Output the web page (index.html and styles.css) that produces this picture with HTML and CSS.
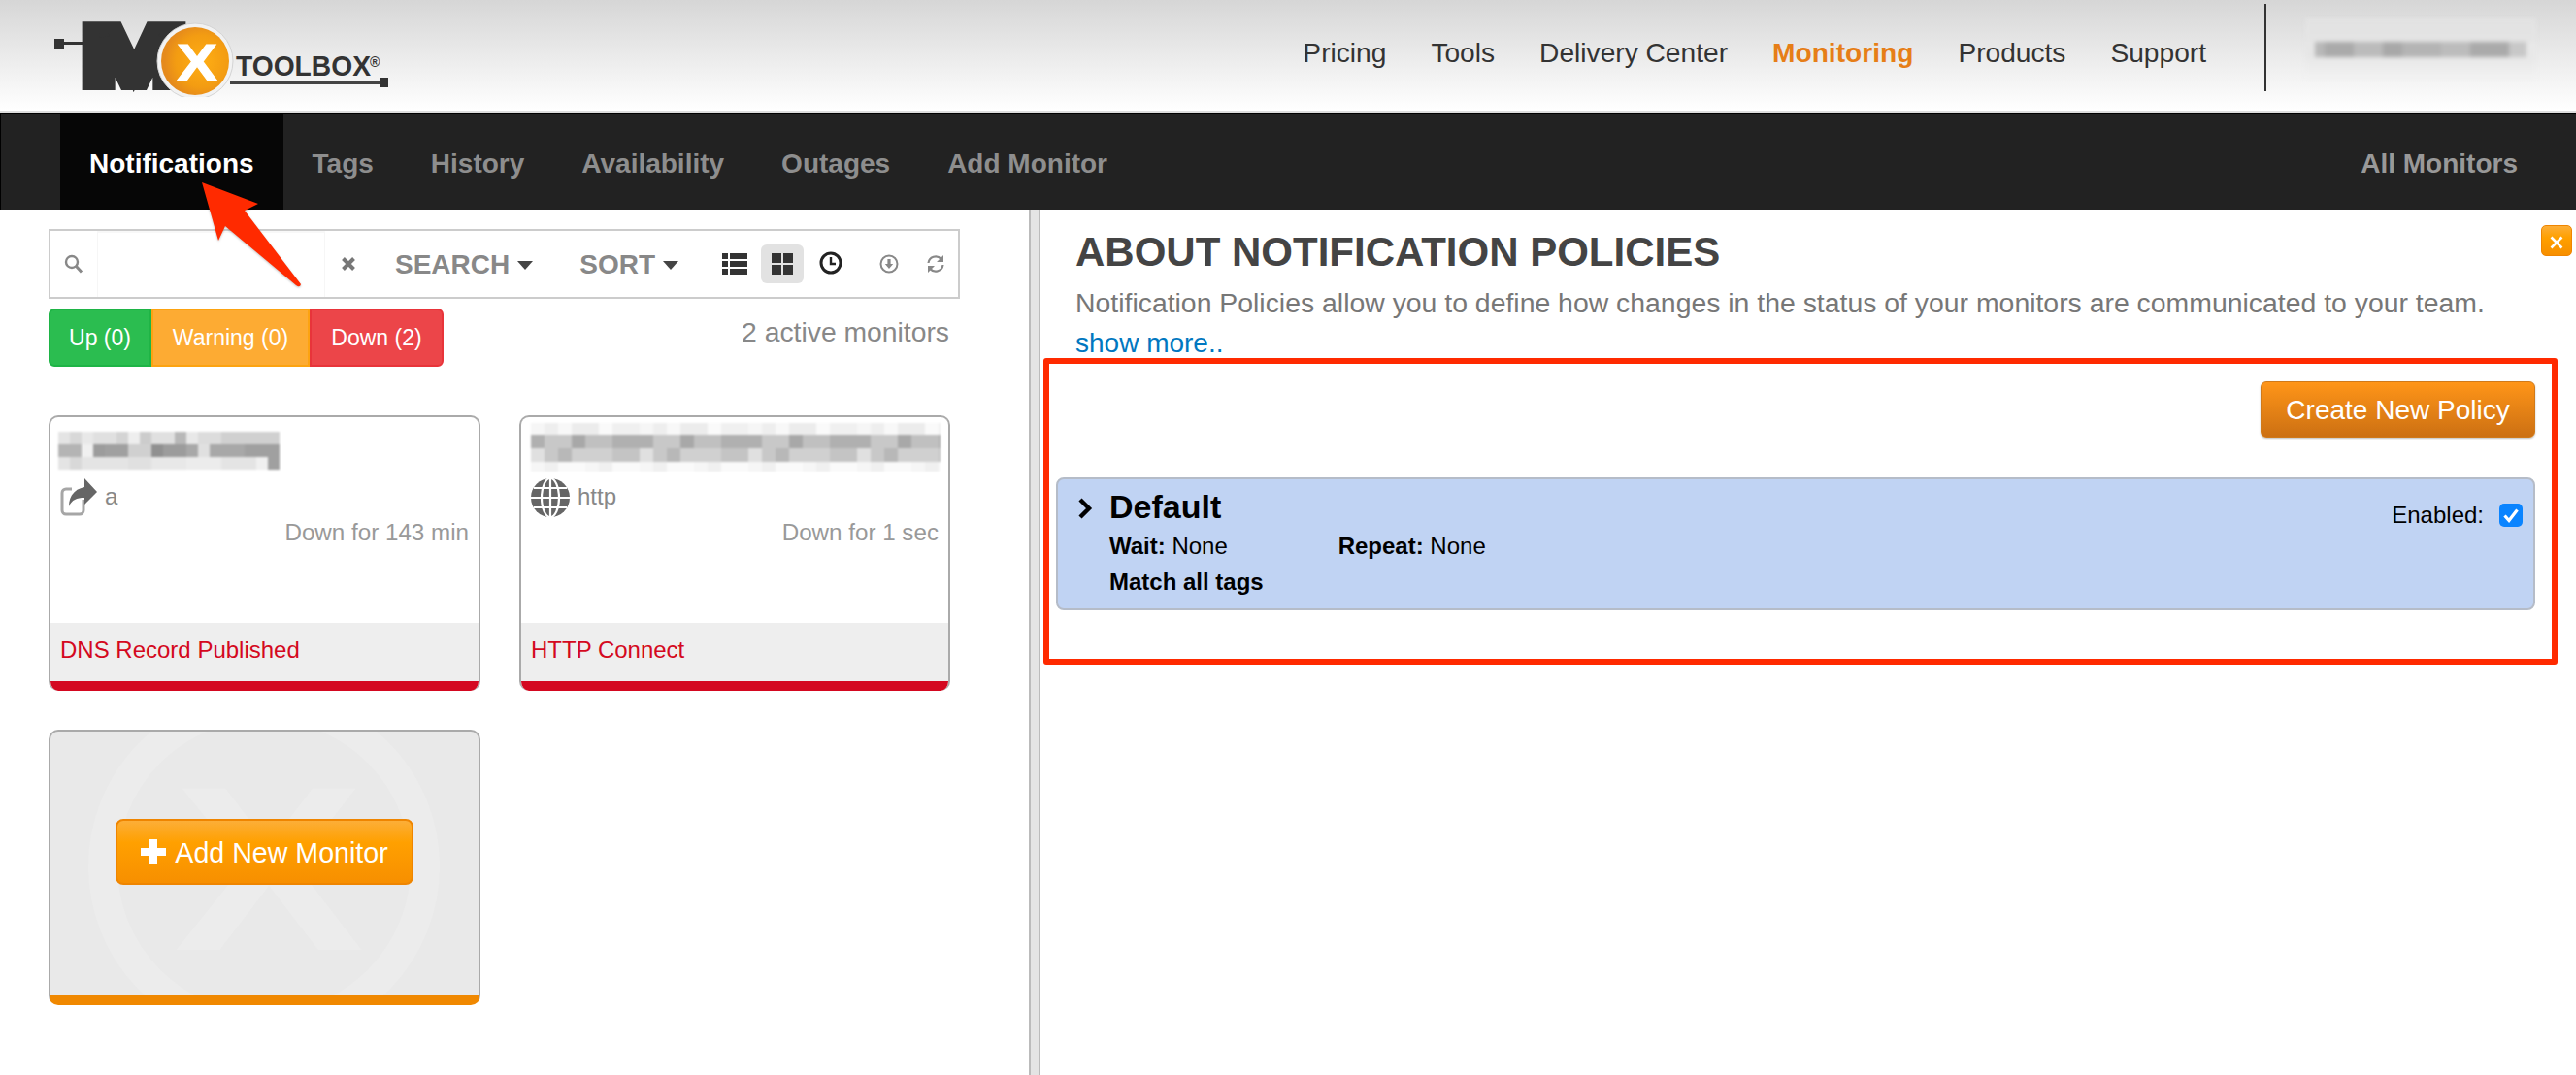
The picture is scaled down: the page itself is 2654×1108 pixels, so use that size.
FILE: index.html
```html
<!DOCTYPE html>
<html lang="en">
<head>
    <meta charset="UTF-8">
    <meta name="viewport" content="width=device-width, initial-scale=1.0">
    <title>MxToolbox Monitoring</title>
    <link rel="stylesheet" href="styles.css">
</head>
<body>
    <header class="topbar">
        <svg class="logo" viewBox="50 10 352 90" width="352" height="90">
            <defs>
                <radialGradient id="logo-orange" cx="60%" cy="50%" r="55%">
                    <stop offset="0" stop-color="#ffae14"/>
                    <stop offset="0.7" stop-color="#f39c12"/>
                    <stop offset="1" stop-color="#e58a1c"/>
                </radialGradient>
            </defs>
            <rect x="56" y="40" width="10" height="10" fill="#333"/>
            <rect x="64" y="43" width="23" height="3" fill="#333"/>
            <text class="logo-m" x="85" y="87" textLength="106" lengthAdjust="spacingAndGlyphs">M</text>
            <circle cx="201" cy="63" r="39" fill="#f2f2f2" stroke="#d4d4d4"/>
            <circle cx="201" cy="63" r="35" fill="url(#logo-orange)"/>
            <text class="logo-x" x="182" y="83" textLength="42" lengthAdjust="spacingAndGlyphs">X</text>
            <text class="logo-name" x="243" y="78" textLength="139" lengthAdjust="spacingAndGlyphs">TOOLBOX</text>
            <text class="logo-reg" x="381" y="69">®</text>
            <rect x="237" y="83" width="156" height="4" fill="#444"/>
            <rect x="391" y="80" width="9" height="10" fill="#333"/>
        </svg>
        <nav class="mainnav">
            <a>Pricing</a>
            <a>Tools</a>
            <a>Delivery Center</a>
            <a class="current">Monitoring</a>
            <a>Products</a>
            <a>Support</a>
        </nav>
        <div class="divider"></div>
        <div class="account-blur"></div>
    </header>

    <nav class="tabs">
        <a class="tab active">Notifications</a>
        <a class="tab">Tags</a>
        <a class="tab">History</a>
        <a class="tab">Availability</a>
        <a class="tab">Outages</a>
        <a class="tab">Add Monitor</a>
        <a class="tab all">All Monitors</a>
    </nav>

    <main class="panes">
        <section class="left">
            <div class="searchbar">
                <svg class="ico-search" viewBox="0 0 20 20" width="20" height="20">
                    <circle cx="8" cy="8" r="6" fill="none" stroke="#888" stroke-width="2.4"/>
                    <path d="M12.5 12.5L18 18.5" stroke="#888" stroke-width="3"/>
                </svg>
                <div class="search-input"></div>
                <svg class="ico-clear" viewBox="0 0 16 16" width="16" height="16">
                    <path d="M2.5 2.5L13.5 13.5M13.5 2.5L2.5 13.5" stroke="#777" stroke-width="4"/>
                </svg>
                <span class="drop drop-search">SEARCH<i class="caret"></i></span>
                <span class="drop drop-sort">SORT<i class="caret"></i></span>
                <svg class="ico-list" viewBox="0 0 26 24" width="26" height="24">
                    <path d="M0 1h6v6H0zM8 1h18v6H8zM0 9h6v6H0zM8 9h18v6H8zM0 17h6v6H0zM8 17h18v6H8z" fill="#333"/>
                </svg>
                <span class="view-on">
                    <svg viewBox="0 0 22 24" width="22" height="24">
                        <path d="M0 1h10v10H0zM12 1h10v10H12zM0 13h10v10H0zM12 13h10v10H12z" fill="#333"/>
                    </svg>
                </span>
                <svg class="ico-clock" viewBox="0 0 24 24" width="24" height="24">
                    <circle cx="12" cy="12" r="10" fill="none" stroke="#222" stroke-width="3"/>
                    <path d="M12 6v7h5" fill="none" stroke="#222" stroke-width="2.4"/>
                </svg>
                <svg class="ico-down" viewBox="0 0 20 20" width="20" height="20">
                    <circle cx="10" cy="10" r="8.5" fill="none" stroke="#888" stroke-width="2"/>
                    <path d="M8.4 5h3.2v5h2.6L10 15l-4.2-5h2.6z" fill="#888"/>
                </svg>
                <svg class="ico-refresh" viewBox="0 0 20 20" width="20" height="20">
                    <path d="M2.5 9A7.5 7.5 0 0 1 15.5 4.8M17.5 11A7.5 7.5 0 0 1 4.5 15.2" fill="none" stroke="#888" stroke-width="2.2"/>
                    <path d="M18 1v7h-7zM2 19v-7h7z" fill="#888"/>
                </svg>
            </div>

            <div class="status-row">
                <div class="status-group">
                    <a class="status up">Up (0)</a>
                    <a class="status warn">Warning (0)</a>
                    <a class="status down">Down (2)</a>
                </div>
                <span class="active-count">2 active monitors</span>
            </div>

            <div class="cards">
                <article class="card">
                    <div class="blur blur-a"></div>
                    <div class="card-type">
                        <svg viewBox="0 0 38 40" width="38" height="40">
                            <path d="M24 22v11a4 4 0 0 1-4 4H6a4 4 0 0 1-4-4V15a4 4 0 0 1 4-4h6" fill="none" stroke="#a6a6a6" stroke-width="3"/>
                            <path d="M25 0l13 14-13 13v-7c-8 0-13 2-16 9 0-11 6-18 16-20z" fill="#666"/>
                        </svg>
                        <span>a</span>
                    </div>
                    <p class="card-time">Down for 143 min</p>
                    <footer class="card-foot">DNS Record Published</footer>
                </article>
                <article class="card">
                    <div class="blur blur-b"></div>
                    <div class="card-type">
                        <svg viewBox="0 0 40 40" width="40" height="40">
                            <circle cx="20" cy="20" r="20" fill="#666"/>
                            <g fill="none" stroke="#fff" stroke-width="2.2">
                                <ellipse cx="20" cy="20" rx="9" ry="20"/>
                                <path d="M20 0v40M0 20h40M3 10h34M3 30h34"/>
                            </g>
                        </svg>
                        <span>http</span>
                    </div>
                    <p class="card-time">Down for 1 sec</p>
                    <footer class="card-foot">HTTP Connect</footer>
                </article>
                <article class="card card-add">
                    <svg class="watermark" viewBox="0 0 440 272" width="440" height="272">
                        <circle cx="220" cy="139" r="166" fill="none" stroke="#ececec" stroke-width="30"/>
                        <text x="127" y="225" textLength="196" lengthAdjust="spacingAndGlyphs">X</text>
                    </svg>
                    <a class="add-btn">
                        <svg viewBox="0 0 26 26" width="26" height="26">
                            <path d="M9 0h8v9h9v8h-9v9H9v-9H0V9h9z" fill="#fff"/>
                        </svg>
                        <span>Add New Monitor</span>
                    </a>
                </article>
            </div>
        </section>

        <div class="splitter"></div>

        <section class="right">
            <a class="close-btn">
                <svg viewBox="0 0 14 14" width="14" height="14">
                    <path d="M1.5 1.5L12.5 12.5M12.5 1.5L1.5 12.5" stroke="#fff" stroke-width="2.6"/>
                </svg>
            </a>
            <div class="about">
                <h1>ABOUT NOTIFICATION POLICIES</h1>
                <p>Notification Policies allow you to define how changes in the status of your monitors are communicated to your team.</p>
                <a class="show-more">show more..</a>
            </div>
            <div class="redbox">
                <div class="actions">
                    <a class="create-btn">Create New Policy</a>
                </div>
                <div class="policy">
                    <svg class="chevron" viewBox="0 0 16 22" width="16" height="22">
                        <path d="M3 2l9 9-9 9" fill="none" stroke="#000" stroke-width="4.4"/>
                    </svg>
                    <div class="policy-body">
                        <h2>Default</h2>
                        <div class="policy-line">
                            <span class="wait"><b>Wait:</b> None</span>
                            <span><b>Repeat:</b> None</span>
                        </div>
                        <div class="policy-line"><b>Match all tags</b></div>
                    </div>
                    <div class="enabled">
                        <span>Enabled:</span>
                        <span class="checkbox">
                            <svg viewBox="0 0 24 24" width="24" height="24">
                                <path d="M5.5 12.5l4.5 5 8.5-11" fill="none" stroke="#fff" stroke-width="3.2"/>
                            </svg>
                        </span>
                    </div>
                </div>
            </div>
        </section>
    </main>

    <!-- annotation arrow -->
    <svg class="arrow" viewBox="0 0 320 320" width="320" height="320">
        <path d="M208 188L266 210L252 217L310 293Q309 297 305 294L232 233L225 248Z" fill="#ff2a00"/>
    </svg>
</body>
</html>
```

FILE: styles.css
```css
/* base */
* {
    box-sizing: border-box;
}

body {
    margin: 0;
    width: 2654px;
    height: 1108px;
    overflow: hidden;
    position: relative;
    background: #fff;
    font-family: "Liberation Sans", Arial, sans-serif;
    font-size: 24px;
    color: #333;
}

/* top bar */
.topbar {
    display: flex;
    align-items: center;
    height: 116px;
    padding-left: 50px;
    background: linear-gradient(#d6d6d6, #fff);
    background-size: 100% 114px;
    background-repeat: no-repeat;
    border-bottom: 2px solid #ddd;
}

.logo {
    align-self: flex-start;
    margin-top: 10px;
}

.logo text {
    font-family: "Liberation Sans", Arial, sans-serif;
    font-weight: 700;
}

.logo-m {
    font-size: 86px;
    fill: #333;
    stroke: #333;
    stroke-width: 12px;
}

.logo-x {
    font-size: 54px;
    fill: #fff;
    stroke: #fff;
    stroke-width: 1px;
}

.logo-name {
    font-size: 30px;
    fill: #333;
}

.logo-reg {
    font-size: 14px;
    fill: #333;
}

.mainnav {
    display: flex;
    gap: 46px;
    margin-left: auto;
    padding-bottom: 4px;
    font-size: 28.15px;
    color: #333;
}

.mainnav .current {
    color: #e67e17;
    font-weight: 700;
}

.divider {
    align-self: flex-start;
    width: 2px;
    height: 90px;
    margin: 4px 0 0 60px;
    background: #333;
}

.account-blur {
    width: 238px;
    height: 62px;
    margin: -14px 41px 0 40px;
    filter: blur(2px);
    background:
        linear-gradient(90deg, #e6e6e6 0 10px, #b8b8b8 10px 20px, #aaa 20px 50px, #bbb 50px 80px, #a8a8a8 80px 100px, #b4b4b4 100px 140px, #bcbcbc 140px 170px, #aaa 170px 210px, #c8c8c8 210px 228px, #e8e8e8 228px) 0 24px / 100% 16px no-repeat,
        linear-gradient(#e2e2e2, #e6e6e6 60%, #f2f2f2);
}

/* dark tab bar */
.tabs {
    display: flex;
    height: 100px;
    padding-left: 61px;
    background: #222;
    border-top: 2px solid #000;
    border-left: 1px solid #000;
}

.tab {
    padding: 0 29px 0 30px;
    line-height: 102px;
    font-size: 28px;
    font-weight: 700;
    color: #8e8e8e;
}

.tab.active {
    padding-right: 30px;
    background: #060606;
    color: #fff;
}

.tab.all {
    margin-left: auto;
    padding-right: 60px;
    color: #999;
}

/* panes */
.panes {
    display: flex;
    height: 892px;
}

.left {
    width: 1060px;
    padding: 20px 0 0 50px;
}

.splitter {
    width: 12px;
    background: #e4e4e4;
    border-left: 2px solid #bbb;
    border-right: 2px solid #bbb;
}

.right {
    position: relative;
    flex: 1;
}

/* search toolbar */
.searchbar {
    display: flex;
    align-items: center;
    width: 939px;
    height: 72px;
    border: 2px solid #ccc;
}

.ico-search {
    margin-left: 14px;
}

.search-input {
    width: 235px;
    height: 68px;
    margin-left: 14px;
    border-left: 1px solid #f6f6f6;
    border-right: 1px solid #f6f6f6;
    border-top: 2px solid #f8f8f8;
}

.ico-clear {
    margin-left: 16px;
}

.drop {
    display: flex;
    align-items: center;
    padding-top: 2px;
    font-size: 28px;
    font-weight: 700;
    color: #888;
}

.drop-search {
    margin-left: 40px;
}

.drop-sort {
    margin-left: 48px;
}

.caret {
    width: 0;
    height: 0;
    margin-left: 8px;
    border-left: 8px solid transparent;
    border-right: 8px solid transparent;
    border-top: 9px solid #444;
}

.ico-list {
    margin-left: 45px;
}

.view-on {
    display: flex;
    align-items: center;
    justify-content: center;
    width: 44px;
    height: 40px;
    margin-left: 14px;
    border-radius: 6px;
    background: #e2e2e2;
}

.ico-clock {
    margin: -2px 0 0 16px;
}

.ico-down {
    margin-left: 38px;
}

.ico-refresh {
    margin-left: 28px;
}

/* status buttons */
.status-row {
    display: flex;
    justify-content: space-between;
    width: 928px;
    margin-top: 10px;
}

.status-group {
    display: flex;
}

.status {
    height: 60px;
    line-height: 56px;
    text-align: center;
    white-space: nowrap;
    font-size: 23px;
    color: #fff;
    border: 2px solid;
}

.status.up {
    width: 106px;
    background: #2bbd50;
    border-color: #1eb446;
    border-radius: 6px 0 0 6px;
}

.status.warn {
    width: 163px;
    background: #fdab33;
    border-color: #fca311;
}

.status.down {
    width: 138px;
    background: #ec4549;
    border-color: #e8343a;
    border-radius: 0 6px 6px 0;
}

.active-count {
    font-size: 28.3px;
    line-height: 48px;
    color: #888;
}

/* monitor cards */
.cards {
    display: grid;
    grid-template-columns: 445px 444px;
    grid-auto-rows: 284px;
    gap: 40px 40px;
    margin-top: 50px;
}

.card {
    display: flex;
    flex-direction: column;
    position: relative;
    overflow: hidden;
    border: 2px solid #aaa;
    border-bottom: 0;
    border-radius: 10px;
}

.blur {
    flex: none;
    filter: blur(1.2px);
}

.blur-a {
    width: 262px;
    height: 39px;
    margin: 15px 0 9px 8px;
    background:
        linear-gradient(90deg, #e4e4e4 0 12px, #d8d8d8 12px 24px, #e8e8e8 24px 36px, #e0e0e0 36px 60px, #d4d4d4 60px 72px, #eee 72px 84px, #ccc 84px 96px, #e0e0e0 96px 120px, #b8b8b8 120px 132px, #e8e8e8 132px 144px, #dcdcdc 144px 168px, #d0d0d0 168px 228px, #fff 228px) 0 0 / 100% 13px no-repeat,
        linear-gradient(90deg, #b4b4b4 0 24px, #f0f0f0 24px 36px, #9c9c9c 36px 48px, #a0a0a0 48px 72px, #d0d0d0 72px 96px, #909090 96px 108px, #9c9c9c 108px 132px, #a8a8a8 132px 144px, #e0e0e0 144px 156px, #a8a8a8 156px 192px, #a0a0a0 192px 228px, #fff 228px) 0 13px / 100% 13px no-repeat,
        linear-gradient(90deg, #e4e4e4 0 12px, #d8d8d8 12px 24px, #e4e4e4 24px 72px, #e0e0e0 72px 96px, #e8e8e8 96px 132px, #ececec 132px 168px, #e4e4e4 168px 204px, #f0f0f0 204px 216px, #a0a0a0 216px 228px, #fff 228px) 0 26px / 100% 13px no-repeat;
}

.blur-b {
    width: 422px;
    height: 50px;
    margin: 6px 0 7px 10px;
    background:
        repeating-linear-gradient(90deg, #f6f6f6 0 14px, #eee 14px 28px, #f8f8f8 28px 42px, #ececec 42px 70px, #fafafa 70px 84px, #f0f0f0 84px 112px) 0 0 / 100% 12px no-repeat,
        repeating-linear-gradient(90deg, #b0b0b0 0 14px, #c8c8c8 14px 42px, #a8a8a8 42px 56px, #c0c0c0 56px 84px, #b0b0b0 84px 112px) 0 12px / 100% 14px no-repeat,
        repeating-linear-gradient(90deg, #e0e0e0 0 14px, #c8c8c8 14px 28px, #b8b8b8 28px 42px, #d0d0d0 42px 84px, #c4c4c4 84px 112px) 0 26px / 100% 14px no-repeat,
        repeating-linear-gradient(90deg, #f6f6f6 0 14px, #f0f0f0 14px 28px, #fafafa 28px 56px) 0 40px / 100% 10px no-repeat;
}

.card-type {
    display: flex;
    align-items: center;
    gap: 8px;
    height: 40px;
    padding-left: 10px;
    color: #888;
}

.card-type span {
    padding-bottom: 3px;
}

.card-time {
    margin: 2px 0 0;
    padding-right: 10px;
    line-height: 28px;
    font-size: 24.2px;
    text-align: right;
    color: #999;
}

.card-foot {
    margin-top: auto;
    height: 70px;
    padding-left: 10px;
    line-height: 56px;
    color: #d40820;
    background: #eee;
    border-bottom: 10px solid #d40820;
}

.card-add {
    align-items: center;
    padding-top: 90px;
    background: #e9e9e9;
    border-bottom: 10px solid #f08800;
}

.watermark {
    position: absolute;
    left: 0;
    top: 0;
}

.watermark text {
    font-family: "Liberation Sans", Arial, sans-serif;
    font-size: 242px;
    font-weight: 700;
    fill: #ececec;
}

.add-btn {
    display: flex;
    align-items: center;
    justify-content: center;
    gap: 9px;
    position: relative;
    width: 307px;
    height: 68px;
    font-size: 28.6px;
    color: #fff;
    background: linear-gradient(#fcae38, #ffa000 35%, #f78f00);
    border: 2px solid #ef8500;
    border-radius: 8px;
}

.add-btn span {
    padding-top: 2px;
}

/* right pane */
.close-btn {
    display: flex;
    align-items: center;
    justify-content: center;
    position: absolute;
    top: 16px;
    right: 4px;
    width: 32px;
    height: 32px;
    padding-top: 3px;
    background: linear-gradient(#fcae38, #ffa000 40%, #f78f00);
    border: 1px solid #ef8500;
    border-radius: 5px;
}

.about {
    height: 153px;
    padding: 19px 0 0 36px;
}

.about h1 {
    margin: 0;
    font-size: 42px;
    line-height: 50px;
    color: #444;
}

.about p {
    margin: 11px 0 0;
    font-size: 28.4px;
    line-height: 32px;
    color: #777;
}

.show-more {
    display: block;
    margin-top: 10px;
    font-size: 28px;
    line-height: 32px;
    color: #0077c0;
}

.redbox {
    width: 1560px;
    height: 316px;
    margin-left: 3px;
    padding: 18px 17px 0 7px;
    border: 6px solid #ff2a00;
    border-radius: 3px;
}

.actions {
    display: flex;
    justify-content: flex-end;
}

.create-btn {
    width: 283px;
    height: 58px;
    line-height: 58px;
    text-align: center;
    font-size: 28px;
    color: #fff;
    background: linear-gradient(#ff9518, #cc7013);
    border: 1px solid #d07a1a;
    border-radius: 6px;
    box-shadow: 0 1px 2px rgba(0, 0, 0, 0.25);
}

.policy {
    display: flex;
    height: 137px;
    margin-top: 41px;
    padding: 0 11px 0 20px;
    background: #c0d3f3;
    border: 2px solid #b5bcc8;
    border-radius: 8px;
    color: #000;
}

.chevron {
    margin-top: 19px;
}

.policy-body {
    margin-left: 17px;
}

.policy-body h2 {
    margin: 8px 0 0;
    font-size: 34px;
    line-height: 40px;
}

.policy-line {
    margin-top: 6px;
    line-height: 30px;
}

.policy-line + .policy-line {
    margin-top: 7px;
}

.wait {
    display: inline-block;
    width: 229px;
}

.enabled {
    display: flex;
    align-items: center;
    gap: 16px;
    margin: 24px 0 0 auto;
    height: 26px;
}

.checkbox {
    display: block;
    width: 24px;
    height: 24px;
    background: #0a84ff;
    border-radius: 5px;
}

/* annotation */
.arrow {
    position: absolute;
    left: 0;
    top: 0;
    pointer-events: none;
    filter: drop-shadow(0 1px 1px rgba(0, 0, 0, 0.25));
}
```
